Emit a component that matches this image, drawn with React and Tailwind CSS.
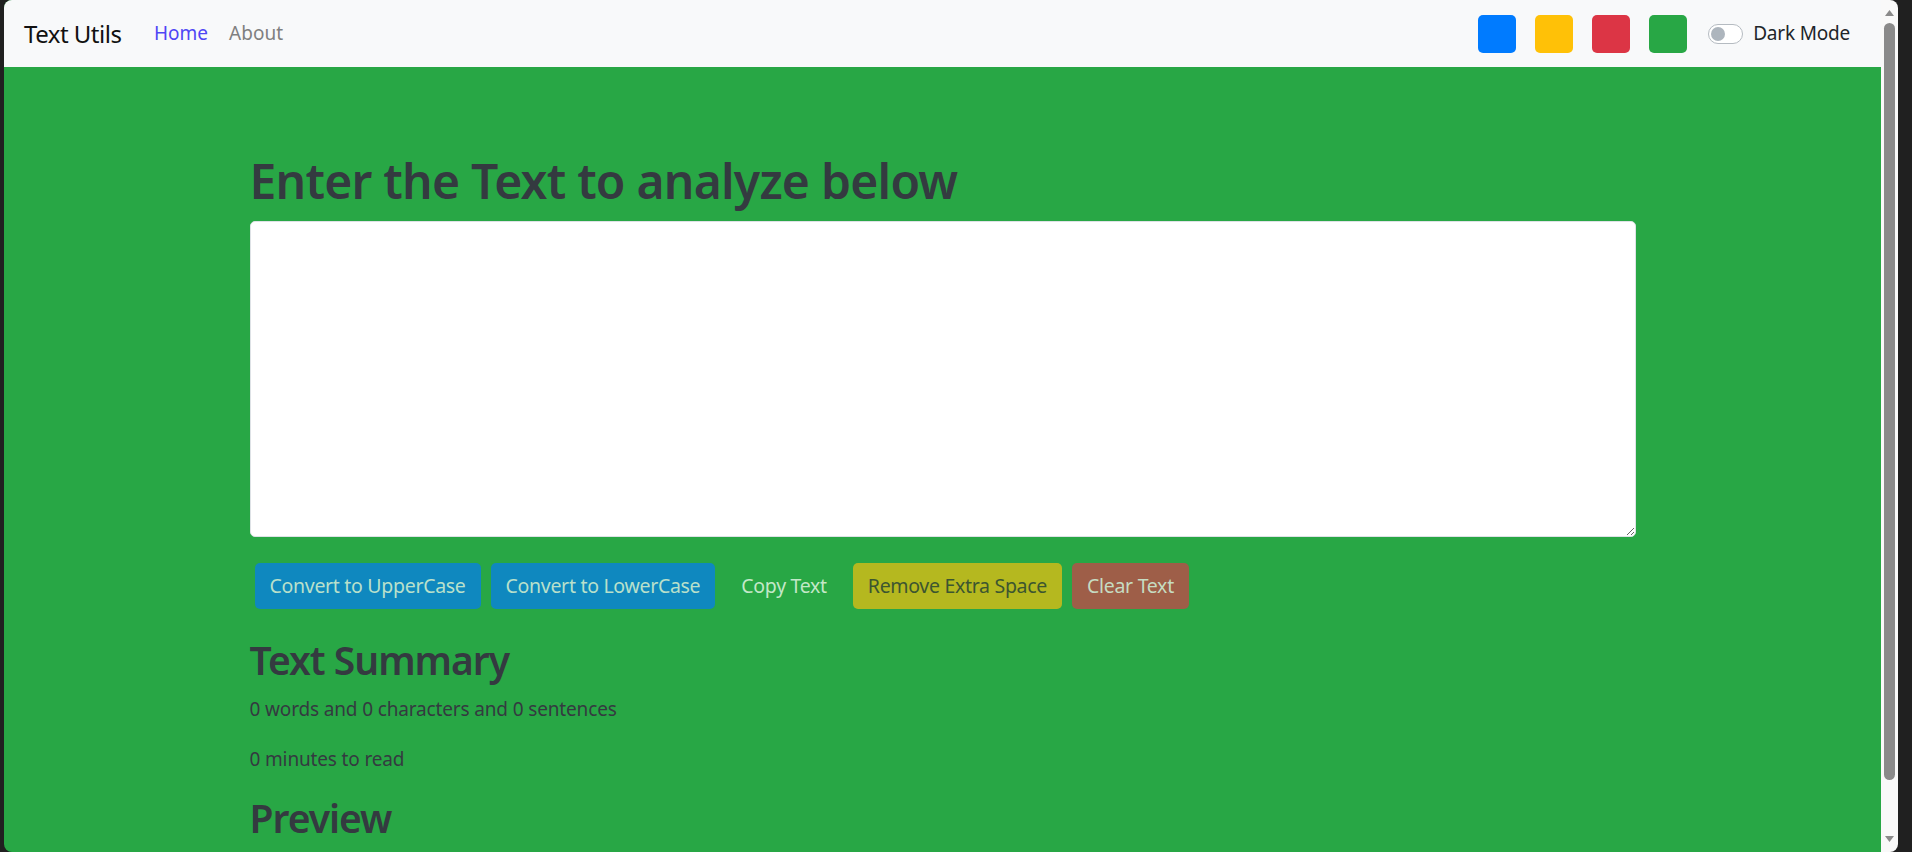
import React from "react";

const font = { fontFamily: '"Noto Sans", "Open Sans", Arial, sans-serif' };

export default function App() {
  return (
    <div className="h-[852px] w-full bg-[#202020] overflow-hidden flex" style={font}>
      <div className="ml-[4px] mr-[14px] flex-1 flex rounded-[8px] overflow-hidden">
        {/* Page */}
        <div className="flex-1 bg-[#28a745] flex flex-col">
          {/* Navbar */}
          <nav className="h-[67px] bg-[#f8f9fa] flex items-center pl-[20px] pr-[31px]">
            <div className="w-[130px] text-[24px] text-[#111] tracking-[-0.5px]">Text Utils</div>
            <div className="flex items-center gap-[21px] text-[19px]">
              <a className="text-[#4f46f5]">Home</a>
              <a className="text-[#808080]">About</a>
            </div>
            <div className="ml-auto flex items-center">
              <div className="flex items-center gap-[19px]">
                <div className="w-[38px] h-[38px] rounded-[5px] bg-[#007bff]"></div>
                <div className="w-[38px] h-[38px] rounded-[5px] bg-[#ffc107]"></div>
                <div className="w-[38px] h-[38px] rounded-[5px] bg-[#dc3545]"></div>
                <div className="w-[38px] h-[38px] rounded-[5px] bg-[#28a745]"></div>
              </div>
              <div className="ml-[21px] w-[35px] h-[20px] rounded-full border border-[#b5bbc1] bg-white flex items-center px-[2px]">
                <div className="w-[14px] h-[14px] rounded-full bg-[#adb5bd]"></div>
              </div>
              <span className="ml-[10px] text-[19px] text-[#212529] tracking-[-0.2px]">Dark Mode</span>
            </div>
          </nav>

          {/* Main */}
          <main className="w-[1386px] mx-auto pt-[84px] text-[#343a40]">
            <h1 className="text-[48px] leading-[60px] font-semibold mb-[10px] tracking-[-0.75px]">
              Enter the Text to analyze below
            </h1>
            <textarea className="block w-full h-[316px] rounded-[5px] border border-[#dee2e6] bg-white outline-none"></textarea>

            <div className="mt-[26px] ml-[5px] flex items-center gap-[10px] text-[19.5px]">
              <button className="h-[46px] px-[15px] rounded-[5px] bg-[#0f88bf] text-[#b9e0cb] tracking-[-0.3px]">
                Convert to UpperCase
              </button>
              <button className="h-[46px] px-[15px] rounded-[5px] bg-[#0f88bf] text-[#b9e0cb] tracking-[-0.3px]">
                Convert to LowerCase
              </button>
              <button className="h-[46px] px-[16px] rounded-[5px] text-[#c3e8c8] tracking-[-0.3px]">
                Copy Text
              </button>
              <button className="h-[46px] px-[15px] rounded-[5px] bg-[#b5b81f] text-[#3c5530] tracking-[-0.3px]">
                Remove Extra Space
              </button>
              <button className="h-[46px] px-[15px] rounded-[5px] bg-[#9e5e48] text-[#c6dcc2] tracking-[-0.3px]">
                Clear Text
              </button>
            </div>

            <h2 className="mt-[27px] text-[39px] leading-[48px] font-semibold mb-[10px] tracking-[-1px]">
              Text Summary
            </h2>
            <p className="text-[19px] leading-[30px] mb-[20px] tracking-[-0.15px]">
              0 words and 0 characters and 0 sentences
            </p>
            <p className="text-[19px] leading-[30px] mb-[20px] tracking-[-0.15px]">0 minutes to read</p>
            <h2 className="text-[39px] leading-[48px] font-semibold tracking-[-1px]">Preview</h2>
          </main>
        </div>

        {/* Scrollbar */}
        <div className="w-[17px] bg-[#f9f9f9] flex flex-col items-center py-[6px]">
          <svg width="9" height="6" viewBox="0 0 9 6" className="mt-[4px]">
            <polygon points="4.5,0 9,6 0,6" fill="#8a8a8a" />
          </svg>
          <div className="mt-[7px] w-[11px] h-[757px] rounded-full bg-[#8a8a8a]"></div>
          <div className="flex-1"></div>
          <svg width="9" height="6" viewBox="0 0 9 6" className="mb-[4px]">
            <polygon points="0,0 9,0 4.5,6" fill="#8a8a8a" />
          </svg>
        </div>
      </div>
    </div>
  );
}
